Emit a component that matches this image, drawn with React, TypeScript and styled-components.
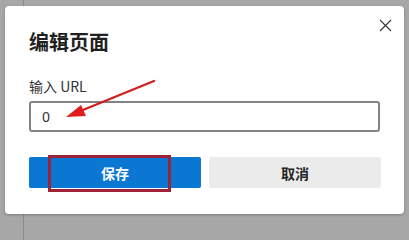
import React from 'react'
import styled, { createGlobalStyle } from 'styled-components'

const GlobalStyle = createGlobalStyle`
    html, body {
        margin: 0;
        padding: 0;
    }
    body {
        background-color: #a7a7a7;
        background-image: linear-gradient(to right, transparent 23px, #8c8c8c 23px, #8c8c8c 24px, transparent 24px);
        font-family: 'Noto Sans CJK SC', 'Noto Sans', sans-serif;
        color: #262626;
    }
`

const Backdrop = styled.div`
    width: 409px;
    height: 222px;
    padding: 6px 5px 0 5px;
    box-sizing: border-box;
`

const Dialog = styled.div`
    position: relative;
    width: 399px;
    height: 208px;
    box-sizing: border-box;
    padding: 22px 23px 24px 24px;
    background: #ffffff;
    border-radius: 4px;
    box-shadow: 0 1px 3px rgba(0, 0, 0, 0.25);
    display: flex;
    flex-direction: column;
`

const Title = styled.h1`
    margin: 0;
    font-size: 20px;
    line-height: 28px;
    font-weight: 700;
    color: #1f1f1f;
`

const CloseButton = styled.button`
    position: absolute;
    top: 7px;
    right: 7px;
    width: 24px;
    height: 24px;
    padding: 0;
    border: none;
    background: transparent;
    display: flex;
    align-items: center;
    justify-content: center;
    cursor: pointer;
`

const Field = styled.div`
    margin-top: 20px;
    display: flex;
    flex-direction: column;
    gap: 5px;
`

const Label = styled.label`
    font-size: 14px;
    line-height: 20px;
    color: #333;
`

const UrlInput = styled.input`
    width: 351px;
    height: 31px;
    box-sizing: border-box;
    border: 2px solid #838383;
    border-radius: 3px;
    padding: 0 11px;
    font-family: 'Noto Sans', sans-serif;
    font-size: 14px;
    color: #333;
    outline: none;
`

const Actions = styled.div`
    margin-top: 25px;
    display: grid;
    grid-template-columns: 172px 172px;
    gap: 8px;
`

const Button = styled.button<{ $primary?: boolean }>`
    position: relative;
    height: 31px;
    border: none;
    border-radius: 2px;
    font-family: 'Noto Sans CJK SC', sans-serif;
    font-size: 14px;
    font-weight: 700;
    background-color: ${p => (p.$primary ? '#0a78d2' : '#ebebeb')};
    color: ${p => (p.$primary ? '#ffffff' : '#262626')};
    cursor: pointer;
`

const Highlight = styled.span`
    position: absolute;
    left: 19px;
    top: -2px;
    width: 123px;
    height: 37px;
    box-sizing: border-box;
    border: 3px solid #9e2238;
    pointer-events: none;
`

const Annotation = styled.svg`
    position: absolute;
    left: 0;
    top: 0;
    pointer-events: none;
`

const App: React.FC = () => {
    return (
        <>
            <GlobalStyle />
            <Backdrop>
                <Dialog>
                    <Title>编辑页面</Title>
                    <CloseButton type="button" aria-label="关闭">
                        <svg width="13" height="13" viewBox="0 0 13 13">
                            <path d="M1 1 L12 12 M12 1 L1 12" stroke="#333" strokeWidth="1.1" fill="none" />
                        </svg>
                    </CloseButton>
                    <Field>
                        <Label>输入 URL</Label>
                        <UrlInput defaultValue="0" />
                    </Field>
                    <Actions>
                        <Button $primary type="button">
                            保存
                            <Highlight />
                        </Button>
                        <Button type="button">取消</Button>
                    </Actions>
                    <Annotation width="399" height="208" viewBox="0 0 399 208">
                        <line x1="149" y1="75" x2="73" y2="106" stroke="#d11f22" strokeWidth="2.4" strokeLinecap="round" />
                        <polygon points="61,111 76,99 81,110" fill="#e01d1d" />
                    </Annotation>
                </Dialog>
            </Backdrop>
        </>
    )
}

export default App
